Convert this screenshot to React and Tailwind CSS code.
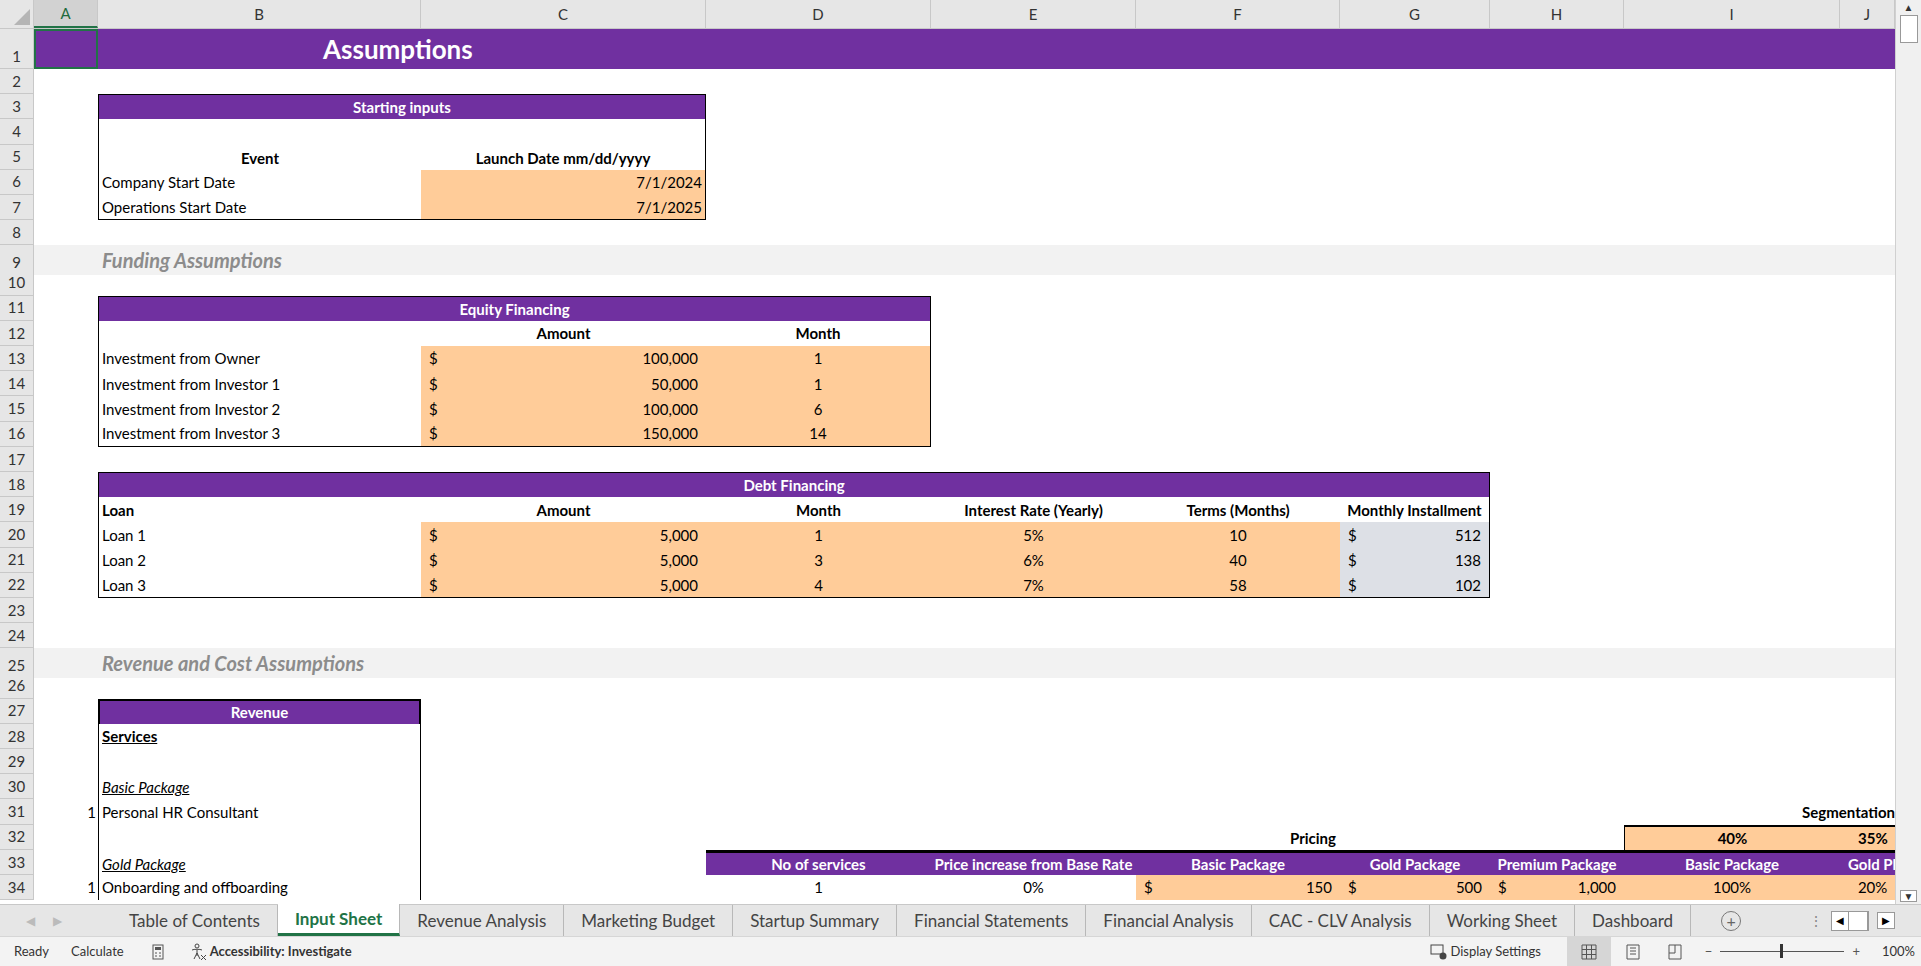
import React from "react";

const COLS =
  "grid grid-cols-[34px_64px_323px_285px_225px_205px_204px_150px_134px_216px_55px]";

const Row = ({ n, h = "h-[25.2px]", className = "", children }) => (
  <div className={`${COLS} ${h} ${className}`}>
    <div className="col-start-1 row-start-1 flex items-end justify-center pb-[1px] bg-[#e6e6e6] border-r border-b border-[#c8c8c8] text-[15px] text-[#333]">
      {n}
    </div>
    {children}
  </div>
);

const Money = ({ v, className = "" }) => (
  <div className={`row-start-1 flex justify-between items-center px-2 ${className}`}>
    <span>$</span>
    <span>{v}</span>
  </div>
);

const Band = ({ n, text }) => (
  <Row n={n}>
    <div className="col-start-2 col-span-10 row-start-1 bg-[#f2f2f2]" />
    <div className="col-start-3 col-span-3 row-start-1 flex items-center px-[4px] text-[20px] font-bold italic text-[#8c8c8c]">
      {text}
    </div>
  </Row>
);

const colHeads = [
  ["A", "w-[64px]"],
  ["B", "w-[323px]"],
  ["C", "w-[285px]"],
  ["D", "w-[225px]"],
  ["E", "w-[205px]"],
  ["F", "w-[204px]"],
  ["G", "w-[150px]"],
  ["H", "w-[134px]"],
  ["I", "w-[216px]"],
  ["J", "w-[55px]"],
];

const tabs = [
  "Table of Contents",
  "Input Sheet",
  "Revenue Analysis",
  "Marketing Budget",
  "Startup Summary",
  "Financial Statements",
  "Financial Analysis",
  "CAC - CLV Analysis",
  "Working Sheet",
  "Dashboard",
];

export default function App() {
  const purple = "bg-[#7030a0] text-white font-bold";
  const orange = "bg-[#ffcc99]";
  return (
    <div
      className="w-[1921px] h-[966px] overflow-hidden bg-white text-[15px] text-black flex flex-col"
      style={{ fontFamily: "Lato, 'Open Sans', sans-serif" }}
    >
      <div className="flex h-[904px]">
        <div className="w-[1895px] overflow-hidden">
          {/* column headers */}
          <div className="flex h-[29px] bg-[#e6e6e6] border-b border-[#c8c8c8] text-[15px] text-[#333]">
            <div className="w-[34px] border-r border-[#c8c8c8] flex items-end justify-end p-[3px]">
              <div className="w-0 h-0 border-l-[16px] border-l-transparent border-b-[16px] border-b-[#b5b5b5]" />
            </div>
            {colHeads.map(([c, w]) => (
              <div
                key={c}
                className={`${w} flex items-center justify-center border-r border-[#c8c8c8] ${
                  c === "A" ? "bg-[#d2d2d2] text-[#1e6b3c] border-b-2 border-b-[#217346]" : ""
                }`}
              >
                {c}
              </div>
            ))}
          </div>

          <Row n="1" h="h-[40px]">
            <div className={`col-start-2 col-span-10 row-start-1 ${purple}`} />
            <div className="col-start-2 row-start-1 border-2 border-[#217346]" />
            <div className="col-start-3 col-span-2 row-start-1 flex items-center pl-[225px] text-white font-bold text-[26px]">
              Assumptions
            </div>
          </Row>
          <Row n="2" />
          <Row n="3">
            <div className={`col-start-3 col-span-2 flex items-center justify-center ${purple} border border-black border-b-0`}>
              Starting inputs
            </div>
          </Row>
          <Row n="4">
            <div className="col-start-3 col-span-2 border-x border-black" />
          </Row>
          <Row n="5">
            <div className="col-start-3 flex items-end justify-center font-bold border-l border-black">Event</div>
            <div className="col-start-4 flex items-end justify-center font-bold border-r border-black">Launch Date mm/dd/yyyy</div>
          </Row>
          <Row n="6">
            <div className="col-start-3 flex items-center px-[3px] border-l border-black">Company Start Date</div>
            <div className={`col-start-4 flex items-center justify-end px-[3px] ${orange} border-r border-black`}>7/1/2024</div>
          </Row>
          <Row n="7">
            <div className="col-start-3 flex items-center px-[3px] border-l border-b border-black">Operations Start Date</div>
            <div className={`col-start-4 flex items-center justify-end px-[3px] ${orange} border-r border-b border-black`}>7/1/2025</div>
          </Row>
          <Row n="8" />
          <Band n="9" text="Funding Assumptions" />
          <Row n="10" />
          <Row n="11">
            <div className={`col-start-3 col-span-3 flex items-center justify-center ${purple} border border-black border-b-0`}>
              Equity Financing
            </div>
          </Row>
          <Row n="12">
            <div className="col-start-3 border-l border-black" />
            <div className="col-start-4 flex items-center justify-center font-bold">Amount</div>
            <div className="col-start-5 flex items-center justify-center font-bold border-r border-black">Month</div>
          </Row>
          {[
            ["13", "Investment from Owner", "100,000", "1"],
            ["14", "Investment from Investor 1", "50,000", "1"],
            ["15", "Investment from Investor 2", "100,000", "6"],
            ["16", "Investment from Investor 3", "150,000", "14"],
          ].map(([n, l, a, m]) => (
            <Row n={n} key={n}>
              <div className={`col-start-3 flex items-center px-[3px] border-l border-black ${n === "16" ? "border-b" : ""}`}>{l}</div>
              <Money v={a} className={`col-start-4 ${orange} ${n === "16" ? "border-b border-black" : ""}`} />
              <div className={`col-start-5 flex items-center justify-center ${orange} border-r border-black ${n === "16" ? "border-b" : ""}`}>{m}</div>
            </Row>
          ))}
          <Row n="17" />
          <Row n="18">
            <div className={`col-start-3 col-span-6 flex items-center justify-center ${purple} border border-black border-b-0`}>
              Debt Financing
            </div>
          </Row>
          <Row n="19">
            <div className="col-start-3 flex items-center px-[3px] font-bold border-l border-black">Loan</div>
            <div className="col-start-4 flex items-center justify-center font-bold">Amount</div>
            <div className="col-start-5 flex items-center justify-center font-bold">Month</div>
            <div className="col-start-6 flex items-center justify-center font-bold">Interest Rate (Yearly)</div>
            <div className="col-start-7 flex items-center justify-center font-bold">Terms (Months)</div>
            <div className="col-start-8 flex items-center justify-center font-bold border-r border-black whitespace-nowrap">Monthly Installment</div>
          </Row>
          {[
            ["20", "Loan 1", "1", "5%", "10", "512"],
            ["21", "Loan 2", "3", "6%", "40", "138"],
            ["22", "Loan 3", "4", "7%", "58", "102"],
          ].map(([n, l, m, r, t, p]) => {
            const b = n === "22" ? "border-b border-black" : "";
            return (
              <Row n={n} key={n}>
                <div className={`col-start-3 flex items-center px-[3px] border-l border-black ${b}`}>{l}</div>
                <Money v="5,000" className={`col-start-4 ${orange} ${b}`} />
                <div className={`col-start-5 flex items-center justify-center ${orange} ${b}`}>{m}</div>
                <div className={`col-start-6 flex items-center justify-center ${orange} ${b}`}>{r}</div>
                <div className={`col-start-7 flex items-center justify-center ${orange} ${b}`}>{t}</div>
                <Money v={p} className={`col-start-8 bg-[#dde0e6] border-r border-black ${b}`} />
              </Row>
            );
          })}
          <Row n="23" />
          <Row n="24" />
          <Band n="25" text="Revenue and Cost Assumptions" />
          <Row n="26" />
          <Row n="27">
            <div className={`col-start-3 flex items-center justify-center ${purple} border-2 border-black border-b-0`}>Revenue</div>
          </Row>
          <Row n="28">
            <div className="col-start-3 flex items-center px-[3px] font-bold underline border-x border-black">Services</div>
          </Row>
          <Row n="29">
            <div className="col-start-3 border-x border-black" />
          </Row>
          <Row n="30">
            <div className="col-start-3 flex items-center px-[3px] italic underline border-x border-black">Basic Package</div>
          </Row>
          <Row n="31">
            <div className="col-start-2 flex items-center justify-end pr-[2px]">1</div>
            <div className="col-start-3 flex items-center px-[3px] border-x border-black">Personal HR Consultant</div>
            <div className="col-start-10 col-span-2 flex items-center justify-end font-bold whitespace-nowrap">Segmentation</div>
          </Row>
          <Row n="32">
            <div className="col-start-3 border-x border-black" />
            <div className="col-start-7 col-span-2 flex items-end justify-center font-bold">Pricing</div>
            <div className={`col-start-10 flex items-center justify-center font-bold ${orange} border-t-2 border-l border-black`}>40%</div>
            <div className={`col-start-11 flex items-center justify-end font-bold ${orange} border-t-2 border-black overflow-hidden`}>
              <span className="whitespace-nowrap">35%&nbsp;&nbsp;</span>
            </div>
          </Row>
          <Row n="33">
            <div className="col-start-3 flex items-end px-[3px] italic underline border-x border-black">Gold Package</div>
            {[
              "No of services",
              "Price increase from Base Rate",
              "Basic Package",
              "Gold Package",
              "Premium Package",
              "Basic Package",
              "Gold Pkg",
            ].map((t, i) => (
              <div
                key={i}
                className={`${["col-start-5", "col-start-6", "col-start-7", "col-start-8", "col-start-9", "col-start-10", "col-start-11"][i]} flex items-center ${
                  i === 6 ? "justify-start pl-[8px]" : "justify-center"
                } ${purple} border-t-[3px] border-black overflow-hidden whitespace-nowrap`}
              >
                {t}
              </div>
            ))}
          </Row>
          <Row n="34">
            <div className="col-start-2 flex items-center justify-end pr-[2px]">1</div>
            <div className="col-start-3 flex items-center px-[3px] border-x border-black">Onboarding and offboarding</div>
            <div className="col-start-5 flex items-center justify-center">1</div>
            <div className="col-start-6 flex items-center justify-center">0%</div>
            <Money v="150" className={`col-start-7 ${orange}`} />
            <Money v="500" className={`col-start-8 ${orange}`} />
            <Money v="1,000" className={`col-start-9 ${orange}`} />
            <div className={`col-start-10 flex items-center justify-center ${orange}`}>100%</div>
            <div className={`col-start-11 flex items-center justify-end ${orange} overflow-hidden`}>20%&nbsp;&nbsp;</div>
          </Row>
        </div>
        {/* vertical scrollbar */}
        <div className="w-[26px] bg-[#f0f0f0] border-l border-[#d0d0d0] flex flex-col items-center justify-between py-[2px]">
          <div className="flex flex-col items-center gap-[3px]">
            <div className="text-[10px] leading-none text-[#333]">▲</div>
            <div className="w-[18px] h-[28px] bg-white border border-[#999]" />
          </div>
          <div className="text-[10px] leading-none text-[#333] border border-[#999] bg-white px-[3px]">▼</div>
        </div>
      </div>

      {/* sheet tabs */}
      <div className="h-[32px] bg-[#e6e6e6] border-t border-[#c8c8c8] flex items-stretch text-[17px] text-[#444]">
        <div className="w-[112px] flex items-center gap-[18px] pl-[26px] text-[#bbb] text-[12px]">
          <span>◀</span>
          <span>▶</span>
        </div>
        {tabs.map((t) => (
          <div
            key={t}
            className={`px-[17px] flex items-center border-r border-[#b8b8b8] whitespace-nowrap ${
              t === "Input Sheet"
                ? "bg-white text-[#217346] font-bold border-b-[3px] border-b-[#217346] -mt-[1px]"
                : ""
            }`}
          >
            {t}
          </div>
        ))}
        <div className="w-[80px] flex items-center justify-center">
          <div className="w-[20px] h-[20px] rounded-full border border-[#777] flex items-center justify-center text-[16px] leading-none text-[#666]">+</div>
        </div>
        <div className="flex-1" />
        <div className="flex items-center gap-[8px] pr-[26px] text-[#888]">
          <span className="text-[14px]">⋮</span>
          <div className="flex items-center border border-[#999] bg-white">
            <span className="text-[10px] px-[4px] text-black">◀</span>
            <div className="w-[20px] h-[18px] border-x border-[#999]" />
          </div>
          <span className="text-[10px] px-[4px] text-black border border-[#999] bg-white">▶</span>
        </div>
      </div>

      {/* status bar */}
      <div className="h-[30px] bg-[#f3f3f3] border-t border-[#d6d6d6] flex items-center text-[13px] text-[#333]">
        <span className="ml-[14px]">Ready</span>
        <span className="ml-[22px]">Calculate</span>
        <svg className="ml-[26px]" width="16" height="16" viewBox="0 0 16 16">
          <rect x="3" y="1" width="10" height="14" fill="none" stroke="#555" />
          <rect x="5" y="3" width="6" height="3" fill="#555" />
          <path d="M5 9h2M9 9h2M5 12h2M9 12h2" stroke="#555" />
        </svg>
        <svg className="ml-[22px]" width="20" height="18" viewBox="0 0 20 18">
          <circle cx="9" cy="3" r="2" fill="none" stroke="#444" />
          <path d="M4 7c2-1 8-1 10 0M9 7v6M9 10l-3 6M9 10l3 6M13 12l5 5M18 12l-5 5" stroke="#444" fill="none" />
        </svg>
        <span className="ml-[2px] font-bold">Accessibility: Investigate</span>
        <div className="flex-1" />
        <svg width="18" height="18" viewBox="0 0 18 18">
          <rect x="1" y="2" width="12" height="9" fill="none" stroke="#444" />
          <circle cx="13" cy="13" r="3.5" fill="#444" />
        </svg>
        <span className="ml-[2px]">Display Settings</span>
        <div className="ml-[26px] w-[44px] h-[30px] bg-[#d6d6d6] flex items-center justify-center">
          <svg width="16" height="16" viewBox="0 0 16 16">
            <path d="M1 1h14v14H1zM1 5.5h14M1 10.5h14M5.5 1v14M10.5 1v14" fill="none" stroke="#555" />
          </svg>
        </div>
        <svg className="ml-[14px]" width="16" height="16" viewBox="0 0 16 16">
          <path d="M2 1h12v14H2zM5 4h6M5 7h6M5 10h6" fill="none" stroke="#555" />
        </svg>
        <svg className="ml-[26px]" width="16" height="16" viewBox="0 0 16 16">
          <path d="M2 1h12v14H2zM2 9h6V1" fill="none" stroke="#555" />
        </svg>
        <span className="ml-[22px] text-[#555]">−</span>
        <div className="ml-[8px] relative w-[124px] h-[1px] bg-[#555]">
          <div className="absolute left-[60px] -top-[7px] w-[3px] h-[14px] bg-[#333]" />
        </div>
        <span className="ml-[8px] text-[#555]">+</span>
        <span className="ml-[22px] mr-[6px]">100%</span>
      </div>
    </div>
  );
}
